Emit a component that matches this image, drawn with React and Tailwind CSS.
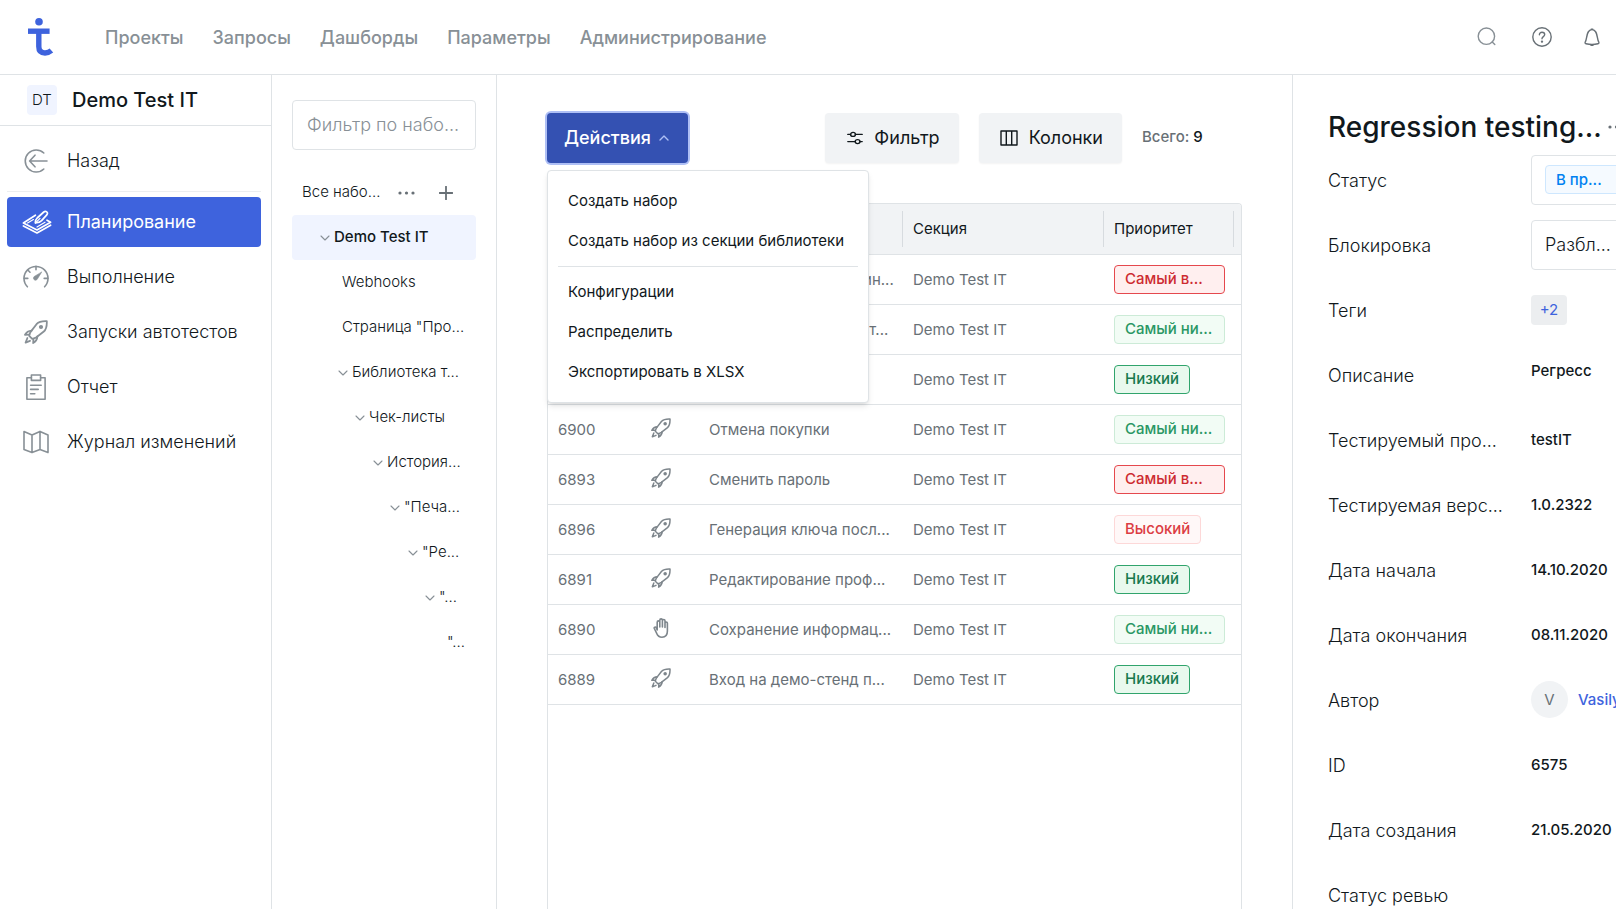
import React from "react";

const Svg = ({ w, h, children, className = "", stroke = 1.5 }) => (
  <svg
    width={w}
    height={h}
    viewBox={`0 0 ${w} ${h}`}
    fill="none"
    stroke="currentColor"
    strokeWidth={stroke}
    strokeLinecap="round"
    strokeLinejoin="round"
    aria-hidden="true"
    className={`shrink-0 ${className}`}
  >
    {children}
  </svg>
);

const Logo = () => (
  <svg width="26" height="38" viewBox="0 0 26 38" aria-hidden="true" fill="none">
    <circle cx="11" cy="3.8" r="3.8" fill="#3e63dd" />
    <path d="M0 10.5h21.6v5.4H0z" fill="#3e63dd" />
    <path d="M10.8 12v16.5c0 4.5 2.4 6.5 6.2 6.5 2.6 0 4.6-.8 6.4-2.4" stroke="#3e63dd" strokeWidth="5.4" />
  </svg>
);

const BackIcon = () => (
  <Svg w={24} h={24} stroke={1.6}>
    <path d="M19.8 4A11 11 0 1 0 19.8 20" />
    <path d="M23 12H6M11 6.2 5.6 12l5.4 5.8" />
  </Svg>
);

const PlanIcon = () => (
  <Svg w={30} h={24} stroke={1.7}>
    <path d="M13.4 5.2 1.4 13 15 20l13.6-7.8-3.6-2" />
    <path d="M1.4 16 15 23l13.600-7.800" />
    <path d="M5.600 13 11.400 9.600M15 17l8-4.800" strokeWidth="1.200" />
    <path d="M13.400 13c-.2-2 .4-3.600 1.800-5l6.600-6c2-1.600 4.600.4 3.200 2.600l-5.400 6c-1.600 1.700-3.600 2.400-6.200 2.400z" />
    <path d="M13.400 13 18 8.400" strokeWidth="1.200" />
  </Svg>
);

const GaugeIcon = () => (
  <Svg w={26} h={24} stroke={1.6}>
    <path d="M4.4 21.8A12 12 0 1 1 21.6 21.8" />
    <path d="M1.2 13.4h3.6M21.2 13.4h3.6M13 1.4v3.4M4.8 5l2.2 2.2" />
    <path d="M18.6 7.2 14.4 14a2.1 2.1 0 1 1-2.8-2.8z" fill="currentColor" strokeWidth=".6" />
  </Svg>
);

const Rocket = ({ size = 24 }) => (
  <svg
    width={size}
    height={size}
    viewBox="0 0 24 24"
    fill="none"
    stroke="currentColor"
    strokeWidth="1.8"
    strokeLinecap="round"
    strokeLinejoin="round"
    aria-hidden="true"
    className="shrink-0"
  >
    <path d="M22.8 1.2c-4.8-.2-8 .5-10.3 3L6.8 11.6c-.8 1.2-1.2 2.6-1.6 4.2l3 3c1.6-.4 3-.8 4.2-1.6l7.4-5.7c2.5-2.3 3.2-5.5 3-10.3z" />
    <circle cx="17" cy="7" r="1.2" fill="currentColor" />
    <path d="M7.6 10.6c-2.8.2-5.2 1.6-6.6 4.2l4.2-.2M13.4 16.4c-.2 2.8-1.6 5.2-4.2 6.6l.2-4.2" />
    <path d="M3.4 18 1.6 22.6l4.4-1.8" />
  </svg>
);

const ClipboardIcon = () => (
  <Svg w={20} h={26} stroke={1.6}>
    <path d="M5.4 3.8H.9v21.4h18.2V3.8h-4.5" />
    <path d="M5.4 1h9.2v5.4H5.4zM4.6 11.2h10.6M4.6 15.4h7.6M4.6 19.8h4.2" />
  </Svg>
);

const MapIcon = () => (
  <Svg w={26} h={24} stroke={1.6}>
    <path d="M1 1.6 9 5l8-3.600L25 5v17.600l-8-3L9 22.600l-8-3zM9 5v17.600M17 1.400v18.200" />
  </Svg>
);

const HandIcon = () => (
  <Svg w={16} h={20} stroke={1.6}>
    <path d="M4.2 12V4.2a1.3 1.3 0 0 1 2.6 0V9M6.8 9V2.2a1.3 1.3 0 0 1 2.6 0V9M9.4 9V2.8a1.3 1.3 0 0 1 2.6 0V9.5M12 9.5V5.2a1.2 1.2 0 0 1 2.4 0V13c0 4-2 6.2-5.4 6.2-3 0-4.4-1.5-5.4-4l-2.3-4.7c-.5-1.4 1.2-2 1.9-.8L4.2 12" />
  </Svg>
);

const SearchIcon = () => (
  <Svg w={20} h={20} stroke={1.4}>
    <circle cx="9.4" cy="9.2" r="8.2" />
    <path d="m15.2 15 2.6 2.6" />
  </Svg>
);

const HelpIcon = () => (
  <Svg w={20} h={20} stroke={1.4}>
    <circle cx="10" cy="10" r="9.2" />
    <path d="M7.4 7.8c0-1.6 1.1-2.6 2.6-2.6s2.7 1 2.7 2.4c0 2-2.7 2.1-2.7 4.2" />
    <circle cx="10" cy="14.6" r=".5" fill="currentColor" />
  </Svg>
);

const BellIcon = () => (
  <Svg w={16} h={18} stroke={1.4}>
    <path d="M1.2 14.2C3.4 10.6 2 1.6 8 1.6s4.6 9 6.8 12.6c.4.8 0 1.4-.8 1.6a26 26 0 0 1-12 0c-.8-.2-1.2-.8-.8-1.6z" />
    <path d="M7.2 1.2h1.6M7 17.2h2" />
  </Svg>
);

const FilterIcon = () => (
  <Svg w={16} h={14} stroke={1.4}>
    <path d="M.8 3.4h2.8M8.4 3.4h6.8M.8 10.6h7.4M13 10.6h2.2" />
    <ellipse cx="6" cy="3.4" rx="2.4" ry="2" />
    <ellipse cx="10.6" cy="10.6" rx="2.4" ry="2" />
  </Svg>
);

const ColumnsIcon = () => (
  <Svg w={18} h={16} stroke={1.4}>
    <path d="M1 1h16v14H1zM6.3 1v14M11.7 1v14" />
  </Svg>
);

const Chevron = ({ up = false, className = "" }) => (
  <Svg w={10} h={6} stroke={up ? 1.4 : 1.1} className={className}>
    <path d={up ? "M1 5l4-4 4 4" : "M1 1l4 4 4-4"} />
  </Svg>
);

const Dots = () => (
  <svg width="17" height="4" viewBox="0 0 17 4" fill="currentColor" aria-hidden="true" className="shrink-0">
    <circle cx="2" cy="2" r="1.6" />
    <circle cx="8.5" cy="2" r="1.6" />
    <circle cx="15" cy="2" r="1.6" />
  </svg>
);

const topNav = ["Проекты", "Запросы", "Дашборды", "Параметры", "Администрирование"];

const sideNav = [
  { label: "Планирование", icon: <PlanIcon />, active: true },
  { label: "Выполнение", icon: <GaugeIcon /> },
  { label: "Запуски автотестов", icon: <Rocket /> },
  { label: "Отчет", icon: <ClipboardIcon /> },
  { label: "Журнал изменений", icon: <MapIcon /> },
];

const tree = [
  { label: "Demo Test IT", pad: "pl-7", open: true, active: true },
  { label: "Webhooks", pad: "pl-[50px]" },
  { label: 'Страница "Про...', pad: "pl-[50px]" },
  { label: "Библиотека т...", pad: "pl-[46px]", open: true },
  { label: "Чек-листы", pad: "pl-[63px]", open: true },
  { label: "История...", pad: "pl-[81px]", open: true },
  { label: '"Печа...', pad: "pl-[98px]", open: true },
  { label: '"Ре...', pad: "pl-[116px]", open: true },
  { label: '"...', pad: "pl-[133px]", open: true },
  { label: '"...', pad: "pl-[155px]" },
];

const priorities = {
  highest: { label: "Самый в...", look: "w-[111px] border-[#e5484d] bg-[#ffefef] text-[#cd2b31]" },
  high: { label: "Высокий", look: "w-fit border-[#fdd8d8] bg-[#fff8f8] text-[#dc3d43]" },
  low: { label: "Низкий", look: "w-fit border-[#30a46c] bg-[#e9f9ee] text-[#18794e]" },
  lowest: { label: "Самый ни...", look: "w-[111px] border-[#ccebd7] bg-[#f2fcf5] text-[#299764]" },
};

const rows = [
  { id: "6903", name: "Проверка входа на лин...", priority: "highest" },
  { id: "6902", name: "Просмотр журнала, ст...", priority: "lowest" },
  { id: "6901", name: "Вход в систему", priority: "low" },
  { id: "6900", name: "Отмена покупки", priority: "lowest" },
  { id: "6893", name: "Сменить пароль", priority: "highest" },
  { id: "6896", name: "Генерация ключа посл...", priority: "high" },
  { id: "6891", name: "Редактирование проф...", priority: "low" },
  { id: "6890", name: "Сохранение информац...", priority: "lowest", manual: true },
  { id: "6889", name: "Вход на демо-стенд п...", priority: "low" },
];

function Header() {
  return (
    <header className="flex h-[75px] shrink-0 items-center border-b border-[#dfe3e6] pl-7 pr-4">
      <a href="#home" aria-label="Test IT" className="mr-[51px]">
        <Logo />
      </a>
      <nav className="flex gap-[29px] pt-0.5">
        {topNav.map((t) => (
          <a key={t} href="#nav" className="text-lg font-medium text-[#889096]">
            {t}
          </a>
        ))}
      </nav>
      <div className="ml-auto flex items-center text-[#687076]">
        <button type="button" aria-label="Поиск" className="mr-[35px] text-[#889096]">
          <SearchIcon />
        </button>
        <button type="button" aria-label="Справка" className="mr-8">
          <HelpIcon />
        </button>
        <button type="button" aria-label="Уведомления">
          <BellIcon />
        </button>
      </div>
    </header>
  );
}

function Sidebar() {
  return (
    <aside className="flex w-[272px] shrink-0 flex-col border-r border-[#dfe3e6]">
      <div className="flex h-[51px] shrink-0 items-center border-b border-[#dfe3e6] pl-[27px]">
        <span className="mr-[15px] flex size-[30px] items-center justify-center rounded bg-[#f0f4ff] text-[15px] font-light">
          DT
        </span>
        <span className="text-xl font-medium">Demo Test IT</span>
      </div>
      <div className="px-[7px] pt-2.5">
        <a href="#back" className="mb-[5px] flex h-[50px] items-center text-lg font-light">
          <span className="ml-[11px] mr-[13px] flex w-9 justify-center text-[#889096]">
            <BackIcon />
          </span>
          Назад
        </a>
        <nav className="mr-[3px] flex flex-col gap-[5px] border-t border-[#eceef0] pt-[5px]">
          {sideNav.map((n) => (
            <a
              key={n.label}
              href="#section"
              className={`flex h-[50px] items-center rounded text-lg ${
                n.active ? "bg-[#3e63dd] text-white" : "font-light"
              }`}
            >
              <span
                className={`ml-[11px] mr-[13px] flex w-9 justify-center ${
                  n.active ? "pl-0.5 text-white" : "text-[#889096]"
                }`}
              >
                {n.icon}
              </span>
              {n.label}
            </a>
          ))}
        </nav>
      </div>
    </aside>
  );
}

function TreePanel() {
  return (
    <section className="flex w-[225px] shrink-0 flex-col border-r border-[#dfe3e6] px-5 pt-[25px]">
      <input
        type="text"
        aria-label="Фильтр по наборам"
        placeholder="Фильтр по набо..."
        className="h-[50px] w-full rounded border border-[#dfe3e6] px-3.5 pb-0.5 text-lg font-light outline-none placeholder:text-[#889096]"
      />
      <div className="mt-5 flex h-[45px] items-center pl-2.5 text-[#687076]">
        <span className="w-24 text-[15px] font-light text-[#11181c]">Все набо...</span>
        <button type="button" aria-label="Ещё" className="mr-6">
          <Dots />
        </button>
        <button type="button" aria-label="Добавить">
          <Svg w={14} h={14} stroke={1.8}>
            <path d="M7 .6v12.8M.6 7h12.8" />
          </Svg>
        </button>
      </div>
      <ul>
        {tree.map((t, i) => (
          <li key={i}>
            <button
              type="button"
              className={`flex h-[45px] w-full items-center whitespace-nowrap rounded text-[15px] ${t.pad} ${
                t.active ? "bg-[#f0f4ff] font-medium" : "font-light"
              }`}
            >
              {t.open && <Chevron className="mr-1 text-[#889096]" />}
              {t.label}
            </button>
          </li>
        ))}
      </ul>
    </section>
  );
}

function MenuItem({ children }) {
  return (
    <button type="button" role="menuitem" className="block h-10 w-full whitespace-nowrap px-5 text-left text-[15px]">
      {children}
    </button>
  );
}

function Toolbar() {
  return (
    <div className="flex shrink-0 items-center">
      <div className="relative mr-auto">
        <button
          type="button"
          aria-expanded="true"
          className="flex h-[50px] items-center rounded bg-[#3451b2] pl-[17px] pr-[19px] text-lg font-medium text-white ring-2 ring-[#aebff5]"
        >
          Действия
          <Chevron up className="ml-2 text-[#aebff5]" />
        </button>
        <div
          role="menu"
          className="absolute left-0 top-[57px] z-10 w-[322px] rounded border border-[#dfe3e6] bg-white py-2.5 shadow-md"
        >
          <MenuItem>Создать набор</MenuItem>
          <MenuItem>Создать набор из секции библиотеки</MenuItem>
          <hr className="mx-2.5 my-[5px] border-[#dfe3e6]" />
          <MenuItem>Конфигурации</MenuItem>
          <MenuItem>Распределить</MenuItem>
          <MenuItem>Экспортировать в XLSX</MenuItem>
        </div>
      </div>
      <button
        type="button"
        className="mr-5 flex h-[50px] items-center gap-[11px] rounded bg-[#f1f3f5] pl-[22px] pr-[19px] text-lg shadow-xs"
      >
        <FilterIcon />
        Фильтр
      </button>
      <button
        type="button"
        className="mr-5 flex h-[50px] items-center gap-[11px] rounded bg-[#f1f3f5] pl-[21px] pr-[19px] text-lg shadow-xs"
      >
        <ColumnsIcon />
        Колонки
      </button>
      <p className="w-[100px] pb-0.5 text-[15px] font-medium text-[#687076]">
        Всего: <span className="text-[#11181c]">9</span>
      </p>
    </div>
  );
}

function HeadCell({ children, className = "" }) {
  return (
    <th className={`h-[50px] p-0 ${className}`}>
      <div className="flex h-9 items-center border-r border-[#d7dbdf] pl-2.5 font-normal">{children}</div>
    </th>
  );
}

function CaseTable() {
  return (
    <div className="mt-10 min-h-0 flex-1 overflow-hidden rounded-t border border-b-0 border-[#dfe3e6]">
      <table className="w-full table-fixed border-collapse text-left text-[15px]">
        <thead>
          <tr className="border-b border-[#dfe3e6] bg-[#f1f3f5]">
            <HeadCell className="w-[78px]">ID</HeadCell>
            <HeadCell className="w-[73px]">Тип</HeadCell>
            <HeadCell>Название</HeadCell>
            <HeadCell className="w-[201px]">Секция</HeadCell>
            <HeadCell className="w-[130px]">Приоритет</HeadCell>
            <th className="w-[7px] p-0" />
          </tr>
        </thead>
        <tbody className="text-[#687076]">
          {rows.map((r) => {
            const p = priorities[r.priority];
            return (
              <tr key={r.id} className="h-[50px] border-b border-[#dfe3e6]">
                <td className="p-0 pl-2.5 pt-0.5">{r.id}</td>
                <td className="p-0">
                  <span className="flex w-[70px] justify-center pb-0.5 text-[#7e868c]">
                    {r.manual ? <HandIcon /> : <Rocket size={20} />}
                  </span>
                </td>
                <td className="truncate p-0 pl-2.5 pt-0.5">{r.name}</td>
                <td className="p-0 pl-2.5 pt-0.5">Demo Test IT</td>
                <td className="p-0 pl-2.5">
                  <span
                    className={`flex h-[29px] items-center whitespace-nowrap rounded border px-2.5 font-medium ${p.look}`}
                  >
                    {p.label}
                  </span>
                </td>
                <td className="p-0" />
              </tr>
            );
          })}
        </tbody>
      </table>
    </div>
  );
}

function Field({ label, htmlFor, children }) {
  return (
    <div className="flex h-[65px] items-center">
      {htmlFor ? (
        <label htmlFor={htmlFor} className="w-[203px] shrink-0 pt-0.5 text-lg font-light">
          {label}
        </label>
      ) : (
        <span className="w-[203px] shrink-0 pt-0.5 text-lg font-light">{label}</span>
      )}
      {children}
    </div>
  );
}

const Value = ({ children }) => <span className="pt-0.5 text-[15px] font-medium">{children}</span>;

function Details() {
  return (
    <aside className="w-[324px] shrink-0 overflow-hidden border-l border-[#dfe3e6] pl-[35px] pt-[31px]">
      <div className="w-[400px]">
        <div className="flex h-[41px] items-center gap-1.5">
          <h1 className="text-[28px] font-medium">Regression testing...</h1>
          <button type="button" aria-label="Ещё" className="text-[#687076]">
            <Dots />
          </button>
        </div>
        <Field label="Статус" htmlFor="status">
          <div className="flex h-[50px] flex-1 items-center rounded border border-[#dfe3e6] px-[13px]">
            <select
              id="status"
              className="h-[29px] w-[110px] appearance-none rounded border border-[#cee7fe] bg-[#f5faff] px-2.5 pt-0.5 text-[15px] font-medium text-[#0081f1]"
            >
              <option>В пр...</option>
            </select>
          </div>
        </Field>
        <Field label="Блокировка" htmlFor="lock">
          <select
            id="lock"
            className="h-[50px] flex-1 appearance-none rounded border border-[#dfe3e6] bg-white px-[13px] text-lg font-light"
          >
            <option>Разбл...</option>
          </select>
        </Field>
        <Field label="Теги">
          <button
            type="button"
            className="flex h-[30px] w-9 items-center justify-center rounded bg-[#eceef0] pt-0.5 text-[15px] text-[#3e63dd]"
          >
            +2
          </button>
        </Field>
        <Field label="Описание">
          <div className="pb-2">
            <Value>Регресс</Value>
          </div>
        </Field>
        <Field label="Тестируемый про...">
          <Value>testIT</Value>
        </Field>
        <Field label="Тестируемая верс...">
          <Value>1.0.2322</Value>
        </Field>
        <Field label="Дата начала">
          <Value>14.10.2020</Value>
        </Field>
        <Field label="Дата окончания">
          <Value>08.11.2020</Value>
        </Field>
        <Field label="Автор">
          <span className="mr-2.5 flex size-[37px] items-center justify-center rounded-full bg-[#f1f3f5] pt-0.5 text-[15px] text-[#687076]">
            V
          </span>
          <a href="#author" className="pt-0.5 text-[15px] font-medium text-[#3e63dd]">
            Vasily
          </a>
        </Field>
        <Field label="ID">
          <Value>6575</Value>
        </Field>
        <Field label="Дата создания">
          <Value>21.05.2020</Value>
        </Field>
        <Field label="Статус ревью" />
      </div>
    </aside>
  );
}

export default function App() {
  return (
    <div className="flex h-screen flex-col overflow-hidden bg-white font-[Inter,sans-serif] text-[#11181c]">
      <Header />
      <div className="flex min-h-0 flex-1">
        <Sidebar />
        <TreePanel />
        <main className="flex min-w-0 flex-1 flex-col px-[50px] pt-[38px]">
          <Toolbar />
          <CaseTable />
        </main>
        <Details />
      </div>
    </div>
  );
}
